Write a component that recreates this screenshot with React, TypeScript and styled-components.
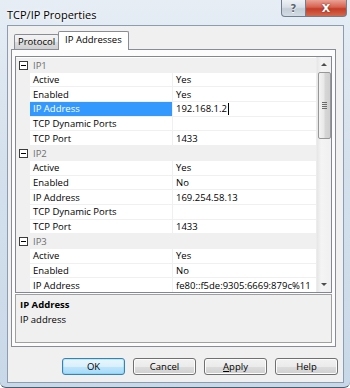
import React from 'react';
import styled, { createGlobalStyle } from 'styled-components';

const GlobalStyle = createGlobalStyle`
  html, body {
    margin: 0;
    padding: 0;
    width: 350px;
    height: 388px;
    overflow: hidden;
    background: #ffffff;
  }
  body {
    font-family: "Open Sans", "Segoe UI", "Noto Sans", sans-serif;
    font-size: 9.5px;
    color: #000;
  }
  * {
    box-sizing: border-box;
  }
`;

const Window = styled.div`
  width: 350px;
  height: 388px;
  display: flex;
  flex-direction: column;
  padding: 0 6px 4px 7px;
  background: linear-gradient(180deg, #e6edf5 0%, #d5e1ed 40%, #c9d8e8 100%);
  border-bottom: 1px solid #4d5b6b;
  border-radius: 0 0 6px 6px;
`;

const TitleBar = styled.div`
  height: 25px;
  display: flex;
  justify-content: space-between;
  align-items: flex-start;
  margin-right: -1px;
`;

const Title = styled.div`
  padding: 7px 0 0 0;
  font-size: 11px;
  color: #000;
  text-shadow: 0 0 6px #ffffff, 0 0 3px #ffffff;
`;

const CaptionButtons = styled.div`
  display: flex;
  margin-right: -2px;
`;

const CaptionButton = styled.div<{ $close?: boolean }>`
  width: ${(p) => (p.$close ? '41px' : '25px')};
  height: 17px;
  display: flex;
  align-items: center;
  justify-content: center;
  border: 1px solid #6f7f90;
  border-top: none;
  border-left: ${(p) => (p.$close ? 'none' : '1px solid #6f7f90')};
  border-radius: ${(p) => (p.$close ? '0 0 4px 0' : '0 0 0 4px')};
  background: ${(p) =>
    p.$close
      ? 'linear-gradient(180deg, #e9a396 0%, #d7614f 45%, #c53d28 55%, #d4684e 100%)'
      : 'linear-gradient(180deg, #eef2f6 0%, #d8dfe7 45%, #c4ccd6 55%, #d3dbe4 100%)'};
  color: ${(p) => (p.$close ? '#ffffff' : '#5b6370')};
  font-family: "DejaVu Sans", sans-serif;
  font-weight: bold;
  font-size: ${(p) => (p.$close ? '11px' : '10px')};
  text-shadow: ${(p) => (p.$close ? '0 0 2px #6b1a10' : '0 1px 0 #ffffff')};
`;

const Client = styled.div`
  flex: 1;
  display: flex;
  flex-direction: column;
  background: #f0f0f0;
  border: 1px solid #8c9db1;
  padding: 5px 7px 0 3px;
`;

const TabStrip = styled.div`
  display: flex;
  align-items: flex-end;
  height: 18px;
  padding-left: 3px;
  position: relative;
  z-index: 1;
`;

const Tab = styled.div<{ $active?: boolean }>`
  height: ${(p) => (p.$active ? '19px' : '15px')};
  margin-bottom: ${(p) => (p.$active ? '-1px' : '0')};
  margin-left: ${(p) => (p.$active ? '-1px' : '0')};
  padding: ${(p) => (p.$active ? '2px 6px 0 6px' : '1px 3px 0 3px')};
  border: 1px solid #898c95;
  border-bottom: none;
  border-radius: 2px 2px 0 0;
  background: ${(p) =>
    p.$active ? '#ffffff' : 'linear-gradient(180deg, #f3f3f3 0%, #ebebeb 50%, #dddddd 51%, #cfcfcf 100%)'};
  line-height: 12px;
  white-space: nowrap;
`;

const Panel = styled.div`
  height: 298px;
  background: #fcfcfc;
  border: 1px solid #898c95;
  padding: 6px 3px 3px 3px;
  display: flex;
  flex-direction: column;
`;

const Grid = styled.div`
  height: 237px;
  border: 1px solid #828790;
  display: flex;
  background: #ffffff;
`;

const Rows = styled.div`
  flex: 1;
  overflow: hidden;
  display: flex;
  flex-direction: column;
  padding-top: 1px;
`;

const CategoryRow = styled.div`
  flex: 0 0 14.7px;
  height: 14.7px;
  display: flex;
  align-items: center;
  background: #f0f0f0;
  color: #6d6d6d;
`;

const Toggle = styled.div`
  width: 9px;
  height: 9px;
  margin: 0 5px 0 3px;
  border: 1px solid #3c3c3c;
  background: #ffffff;
  position: relative;
  &::after {
    content: '';
    position: absolute;
    left: 1px;
    right: 1px;
    top: 3px;
    height: 1px;
    background: #000;
  }
`;

const PropRow = styled.div`
  flex: 0 0 14.7px;
  height: 14.7px;
  display: grid;
  grid-template-columns: 14px 143px 1fr;
`;

const Margin = styled.div`
  background: #f0f0f0;
`;

const Cell = styled.div<{ $selected?: boolean; $label?: boolean }>`
  display: flex;
  align-items: center;
  padding-left: 3px;
  border-bottom: 1px solid #f0f0f0;
  border-right: ${(p) => (p.$label ? '1px solid #f0f0f0' : 'none')};
  background: ${(p) => (p.$selected ? '#3399ff' : '#ffffff')};
  color: ${(p) => (p.$selected ? '#ffffff' : '#000000')};
  white-space: nowrap;
  overflow: hidden;
`;

const Caret = styled.span`
  display: inline-block;
  width: 1px;
  height: 12px;
  background: #000;
  margin-left: 1px;
`;

const ScrollBar = styled.div`
  width: 15px;
  display: flex;
  flex-direction: column;
  align-items: center;
  background: linear-gradient(90deg, #e6e6e6 0%, #f4f4f4 30%, #f0f0f0 100%);
  border-left: 1px solid #ececec;
`;

const Arrow = styled.div<{ $down?: boolean }>`
  width: 15px;
  height: 15px;
  display: flex;
  align-items: center;
  justify-content: center;
  &::after {
    content: '';
    width: 0;
    height: 0;
    border-left: 3px solid transparent;
    border-right: 3px solid transparent;
    ${(p) => (p.$down ? 'border-top: 3px solid #4d4d4d;' : 'border-bottom: 3px solid #4d4d4d;')}
  }
`;

const Thumb = styled.div`
  width: 13px;
  height: 67px;
  border: 1px solid #979797;
  border-radius: 2px;
  background: linear-gradient(90deg, #f3f3f3 0%, #e8e8e8 45%, #d6d6d6 55%, #cfcfcf 100%);
  display: flex;
  flex-direction: column;
  align-items: center;
  justify-content: center;
  gap: 1px;
`;

const Grip = styled.div`
  width: 5px;
  height: 1px;
  background: #6b6b6b;
`;

const Spacer = styled.div`
  flex: 1;
`;

const Description = styled.div`
  height: 51px;
  margin-top: 1px;
  background: #f0f0f0;
  border: 1px solid #a0a0a0;
  padding: 3px 4px;
  display: flex;
  flex-direction: column;
  gap: 2px;
`;

const DescTitle = styled.div`
  font-weight: bold;
  line-height: 13px;
`;

const DescText = styled.div`
  line-height: 13px;
`;

const ButtonRow = styled.div`
  display: flex;
  justify-content: flex-end;
  gap: 8px;
  margin-top: 11px;
  margin-right: -2px;
`;

const Button = styled.div<{ $default?: boolean }>`
  width: 63px;
  height: 17px;
  display: flex;
  align-items: center;
  justify-content: center;
  border: 1px solid ${(p) => (p.$default ? '#3c7fb1' : '#707070')};
  border-radius: 3px;
  background: ${(p) =>
    p.$default
      ? 'linear-gradient(180deg, #eaf6fd 0%, #d9f0fc 50%, #bee6fd 51%, #a7d9f5 100%)'
      : 'linear-gradient(180deg, #f2f2f2 0%, #ebebeb 50%, #dddddd 51%, #cfcfcf 100%)'};
  box-shadow: ${(p) => (p.$default ? 'inset 0 0 0 1px #48d2fb55' : 'inset 0 0 0 1px #fcfcfc')};
  color: #000;
`;

type Prop = { label: string; value: string; selected?: boolean };

// only the rows that fit in the visible part of the grid
const groups: { name: string; props: Prop[] }[] = [
  {
    name: 'IP1',
    props: [
      { label: 'Active', value: 'Yes' },
      { label: 'Enabled', value: 'Yes' },
      { label: 'IP Address', value: '192.168.1.2', selected: true },
      { label: 'TCP Dynamic Ports', value: '' },
      { label: 'TCP Port', value: '1433' },
    ],
  },
  {
    name: 'IP2',
    props: [
      { label: 'Active', value: 'Yes' },
      { label: 'Enabled', value: 'No' },
      { label: 'IP Address', value: '169.254.58.13' },
      { label: 'TCP Dynamic Ports', value: '' },
      { label: 'TCP Port', value: '1433' },
    ],
  },
  {
    name: 'IP3',
    props: [
      { label: 'Active', value: 'Yes' },
      { label: 'Enabled', value: 'No' },
      { label: 'IP Address', value: 'fe80::f5de:9305:6669:879c%11' },
    ],
  },
];

const App: React.FC = () => {
  return (
    <>
      <GlobalStyle />
      <Window>
        <TitleBar>
          <Title>TCP/IP Properties</Title>
          <CaptionButtons>
            <CaptionButton>?</CaptionButton>
            <CaptionButton $close>X</CaptionButton>
          </CaptionButtons>
        </TitleBar>

        <Client>
          <TabStrip>
            <Tab>Protocol</Tab>
            <Tab $active>IP Addresses</Tab>
          </TabStrip>

          <Panel>
            <Grid>
              <Rows>
                {groups.map((g) => (
                  <React.Fragment key={g.name}>
                    <CategoryRow>
                      <Toggle />
                      {g.name}
                    </CategoryRow>
                    {g.props.map((p, i) => (
                      <PropRow key={g.name + i}>
                        <Margin />
                        <Cell $label $selected={p.selected}>
                          {p.label}
                        </Cell>
                        <Cell>
                          {p.value}
                          {p.selected && <Caret />}
                        </Cell>
                      </PropRow>
                    ))}
                  </React.Fragment>
                ))}
              </Rows>
              <ScrollBar>
                <Arrow />
                <Thumb>
                  <Grip />
                  <Grip />
                  <Grip />
                  <Grip />
                </Thumb>
                <Spacer />
                <Arrow $down />
              </ScrollBar>
            </Grid>

            <Description>
              <DescTitle>IP Address</DescTitle>
              <DescText>IP address</DescText>
            </Description>
          </Panel>

          <ButtonRow>
            <Button $default>OK</Button>
            <Button>Cancel</Button>
            <Button>
              <span>
                <u>A</u>pply
              </span>
            </Button>
            <Button>Help</Button>
          </ButtonRow>
        </Client>
      </Window>
    </>
  );
};

export default App;
